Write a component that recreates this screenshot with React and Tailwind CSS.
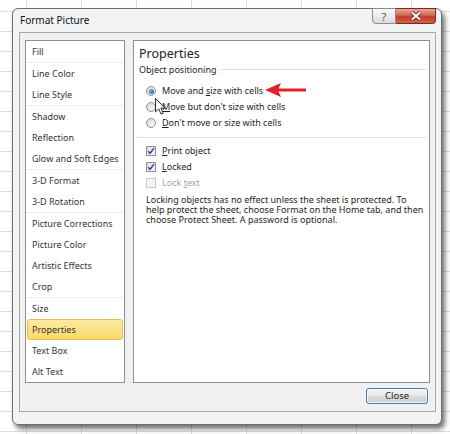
import React from 'react';

const groups = [
  ['Fill'],
  ['Line Color', 'Line Style'],
  ['Shadow', 'Reflection', 'Glow and Soft Edges'],
  ['3-D Format', '3-D Rotation'],
  ['Picture Corrections', 'Picture Color', 'Artistic Effects', 'Crop'],
  ['Size', 'Properties', 'Text Box', 'Alt Text'],
];

function Radio({ checked }) {
  return (
    <span className="flex h-[10px] w-[10px] shrink-0 items-center justify-center rounded-full border border-[#8c8f94] bg-[linear-gradient(135deg,#d8d8d8,#fbfbfb)]">
      {checked && (
        <span className="h-[5px] w-[5px] rounded-full bg-[radial-gradient(circle_at_35%_35%,#6fb6e3,#1b4e7c)]" />
      )}
    </span>
  );
}

function Check({ checked, disabled }) {
  return (
    <span
      className={`flex h-[10px] w-[10px] shrink-0 items-center justify-center border ${
        disabled
          ? 'border-[#c9c9c9] bg-[#f6f6f6]'
          : 'border-[#8c8f94] bg-[linear-gradient(135deg,#dcdcdc,#fafafa)]'
      }`}
    >
      {checked && (
        <svg width="8" height="8" viewBox="0 0 8 8">
          <path d="M1 4.2 L3 6.3 L7 1.3" fill="none" stroke="#3c4f8a" strokeWidth="1.5" />
        </svg>
      )}
    </span>
  );
}

export default function App() {
  return (
    <div className="h-[434px] w-[450px] overflow-hidden bg-white bg-[linear-gradient(to_right,#dcdcdc_1px,transparent_1px),linear-gradient(to_bottom,#dcdcdc_1px,transparent_1px)] bg-[size:55px_20px] bg-[position:26px_11px] pl-3 pt-2 font-['Noto_Sans',sans-serif] text-[9px] text-[#1e1e1e]">
      <div className="flex h-[417px] w-[430px] flex-col rounded-[6px] border border-[#6d6d6d] bg-[#f2f3f4] shadow-[3px_4px_5px_rgba(0,0,0,0.55)]">
        {/* title bar */}
        <div className="flex h-[23px] items-start justify-between">
          <span className="ml-[7px] mt-[5px] text-[10px] leading-[12px] text-[#111]">Format Picture</span>
          <div className="mr-[5px] mt-[-1px] flex">
            <div className="flex h-[16px] w-[24px] items-center justify-center rounded-bl-[4px] border border-[#8d8d8d] bg-[linear-gradient(to_bottom,#fafafa,#dcdcdc)] text-[11px] leading-none text-[#555]">
              ?
            </div>
            <div className="flex h-[16px] w-[40px] items-center justify-center rounded-br-[4px] border border-l-0 border-[#7b2a1d] bg-[linear-gradient(to_bottom,#e9a898,#d06650_45%,#c23b26_55%,#d4624c)]">
              <svg width="12" height="10" viewBox="0 0 12 10">
                <path d="M2 1.5 L10 8.5 M10 1.5 L2 8.5" stroke="#6b1d12" strokeWidth="3.6" />
                <path d="M2 1.5 L10 8.5 M10 1.5 L2 8.5" stroke="#fff" strokeWidth="2" />
              </svg>
            </div>
          </div>
        </div>

        {/* client area */}
        <div className="mb-[12px] ml-[6px] mr-[5px] flex flex-1 flex-col border border-[#a8a8a8] bg-[#f0f0f0]">
          <div className="flex gap-[8px] px-[5px] pt-[7px]">
            <div className="h-[343px] w-[100px] shrink-0 border border-[#8e9095] bg-white">
              {groups.map((g, gi) => (
                <div key={gi} className={gi > 0 ? 'border-t border-[#ececec]' : ''}>
                  {g.map((item) => (
                    <div
                      key={item}
                      className={`mx-px flex h-[21px] items-center whitespace-nowrap rounded-[3px] border px-[4px] text-[#333] ${
                        item === 'Properties'
                          ? 'border-[#e2bf5c] bg-[linear-gradient(to_bottom,#fdeba6,#fbd867)] text-[#222]'
                          : 'border-transparent'
                      }`}
                    >
                      {item}
                    </div>
                  ))}
                </div>
              ))}
            </div>

            <div className="relative h-[343px] min-w-0 flex-1 overflow-hidden border border-[#8e9095] bg-white">
              <div className="pl-[5px] pt-[4px] text-[12.5px] leading-[18px] text-[#222]">Properties</div>
              <div className="flex items-center pl-[5px] pr-[3px] leading-[13px]">
                <span>Object positioning</span>
                <span className="ml-[4px] h-px flex-1 bg-[#dedede]" />
              </div>

              <div className="mt-[7px] pl-[12px]">
                <div className="flex h-[16px] items-center gap-[6px]">
                  <Radio checked />
                  <span>
                    Move and <u>s</u>ize with cells
                  </span>
                </div>
                <div className="flex h-[16px] items-center gap-[6px]">
                  <Radio />
                  <span>
                    <u>M</u>ove but don't size with cells
                  </span>
                </div>
                <div className="flex h-[16px] items-center gap-[6px]">
                  <Radio />
                  <span>
                    <u>D</u>on't move or size with cells
                  </span>
                </div>
              </div>

              <div className="mx-[3px] mt-[6px] h-px bg-[#dedede]" />

              <div className="mt-[5px] flex flex-col pl-[12px]">
                <div className="flex h-[16px] items-center gap-[6px]">
                  <Check checked />
                  <span>
                    <u>P</u>rint object
                  </span>
                </div>
                <div className="flex h-[16px] items-center gap-[6px]">
                  <Check checked />
                  <span>
                    <u>L</u>ocked
                  </span>
                </div>
                <div className="flex h-[16px] items-center gap-[6px]">
                  <Check disabled />
                  <span className="text-[#a3a3a3]">
                    Lock <u>t</u>ext
                  </span>
                </div>

                <div className="mt-[4px] h-[10px] whitespace-nowrap leading-[10px]">
                  Locking objects has no effect unless the sheet is protected. To
                </div>
                <div className="h-[10px] whitespace-nowrap leading-[10px]">
                  help protect the sheet, choose Format on the Home tab, and then
                </div>
                <div className="h-[10px] whitespace-nowrap leading-[10px]">
                  choose Protect Sheet. A password is optional.
                </div>
              </div>

              {/* red annotation arrow */}
              <svg className="absolute left-[131px] top-[42px]" width="41" height="14" viewBox="0 0 41 14">
                <path d="M0 7 L16 0 L13.5 5.4 L41 5.4 L41 8.6 L13.5 8.6 L16 14 Z" fill="#e3212b" />
              </svg>

              {/* mouse cursor */}
              <svg className="absolute left-[21px] top-[57px]" width="11" height="17" viewBox="0 0 12 19">
                <path d="M0.5 0.5 L0.5 15.5 L4 12.2 L6.6 18 L9 17 L6.5 11.3 L11 11.3 Z" fill="#fff" stroke="#111" strokeWidth="1" strokeLinejoin="round" />
              </svg>
            </div>
          </div>

          <div className="flex justify-end pr-[7px] pt-[5px]">
            <div className="flex h-[16px] w-[62px] items-center justify-center rounded-[3px] border border-[#3c7fb1] bg-[linear-gradient(to_bottom,#f2f2f2,#ebebeb_45%,#dddddd_50%,#cfcfcf)] shadow-[inset_0_0_0_1px_rgba(255,255,255,0.7)] text-[9.5px] text-[#222]">
              Close
            </div>
          </div>
        </div>
      </div>
    </div>
  );
}
